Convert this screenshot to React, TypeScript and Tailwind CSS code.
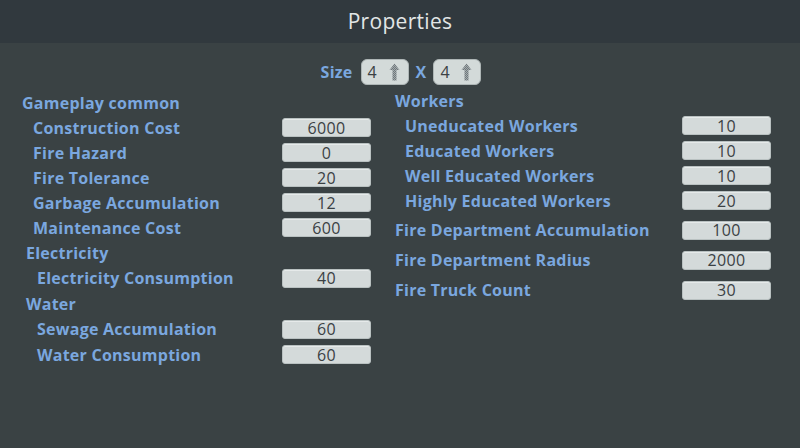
import React from 'react';

type Row = { label: string; value: string; indent: string };

const font = { fontFamily: '"Open Sans", "DejaVu Sans", sans-serif' };

function ValueBox({ value }: { value: string }) {
  return (
    <div className="w-[89px] h-[19px] rounded-[3px] bg-[#d4dada] border border-[#b9c1c1] shadow-[inset_0_1px_0_#e6eaea] flex items-center justify-center text-[16px] tracking-[0.3px] leading-none text-[#3b4144]">
      {value}
    </div>
  );
}

function UpArrow() {
  return (
    <svg width="11" height="18" viewBox="0 0 11 18">
      <defs>
        <pattern id="dots" width="2" height="2" patternUnits="userSpaceOnUse">
          <rect width="2" height="2" fill="#a3abad" />
          <rect width="1" height="1" fill="#6f777b" />
          <rect x="1" y="1" width="1" height="1" fill="#6f777b" />
        </pattern>
      </defs>
      <path d="M5.5 0.5 L10.5 7 L7.5 7 L7.5 17.5 L3.5 17.5 L3.5 7 L0.5 7 Z" fill="url(#dots)" />
    </svg>
  );
}

function SizeBox() {
  return (
    <div className="w-[48px] h-[26px] rounded-[6px] bg-[#d3dad9] border border-[#aeb6b6] flex items-center pl-[6px] pr-[8px] justify-between text-[16px] text-[#3b4144]">
      <span>4</span>
      <UpArrow />
    </div>
  );
}

const labelCls = 'text-[16px] font-bold tracking-[0.25px] text-[#7aa7df]';

function PropRow({ label, value, indent, h }: Row & { h: string }) {
  return (
    <div className={`flex items-center ${h}`}>
      <div className={`flex-1 ${indent} ${labelCls}`}>{label}</div>
      <ValueBox value={value} />
    </div>
  );
}

function Header({ text, indent, h }: { text: string; indent: string; h: string }) {
  return <div className={`flex items-center ${h} ${indent} ${labelCls}`}>{text}</div>;
}

export default function App() {
  const gameplay: Row[] = [
    { label: 'Construction Cost', value: '6000', indent: 'pl-[11px]' },
    { label: 'Fire Hazard', value: '0', indent: 'pl-[11px]' },
    { label: 'Fire Tolerance', value: '20', indent: 'pl-[11px]' },
    { label: 'Garbage Accumulation', value: '12', indent: 'pl-[11px]' },
    { label: 'Maintenance Cost', value: '600', indent: 'pl-[11px]' },
  ];
  const workers: Row[] = [
    { label: 'Uneducated Workers', value: '10', indent: 'pl-[10px]' },
    { label: 'Educated Workers', value: '10', indent: 'pl-[10px]' },
    { label: 'Well Educated Workers', value: '10', indent: 'pl-[10px]' },
    { label: 'Highly Educated Workers', value: '20', indent: 'pl-[10px]' },
  ];
  const fire: Row[] = [
    { label: 'Fire Department Accumulation', value: '100', indent: '' },
    { label: 'Fire Department Radius', value: '2000', indent: '' },
    { label: 'Fire Truck Count', value: '30', indent: '' },
  ];

  return (
    <div className="w-[800px] h-[448px] bg-[#3a4244] overflow-hidden" style={font}>
      <div className="h-[43px] bg-[#31393e] flex items-center justify-center">
        <span className="text-[21px] text-[#e2e6e6] tracking-[0.3px]">Properties</span>
      </div>

      <div className="mt-[16px] h-[26px] flex items-center justify-center pl-[2px]">
        <span className={`${labelCls} mr-[8px]`}>Size</span>
        <SizeBox />
        <span className={`${labelCls} mx-[7px]`}>X</span>
        <SizeBox />
      </div>

      <div className="flex">
        <div className="w-[349px] ml-[22px] pt-[5px]">
          <Header text="Gameplay common" indent="" h="h-[25px]" />
          {gameplay.map((r) => (
            <PropRow key={r.label} {...r} h="h-[25px]" />
          ))}
          <Header text="Electricity" indent="pl-[4px]" h="h-[25px]" />
          <PropRow label="Electricity Consumption" value="40" indent="pl-[15px]" h="h-[26px]" />
          <Header text="Water" indent="pl-[4px]" h="h-[25px]" />
          <PropRow label="Sewage Accumulation" value="60" indent="pl-[15px]" h="h-[26px]" />
          <PropRow label="Water Consumption" value="60" indent="pl-[15px]" h="h-[25px]" />
        </div>

        <div className="w-[376px] ml-[24px] pt-[3px]">
          <Header text="Workers" indent="" h="h-[25px]" />
          {workers.map((r) => (
            <PropRow key={r.label} {...r} h="h-[25px]" />
          ))}
          <div className="mt-[2px]">
            {fire.map((r) => (
              <PropRow key={r.label} {...r} h="h-[30px]" />
            ))}
          </div>
        </div>
      </div>
    </div>
  );
}
